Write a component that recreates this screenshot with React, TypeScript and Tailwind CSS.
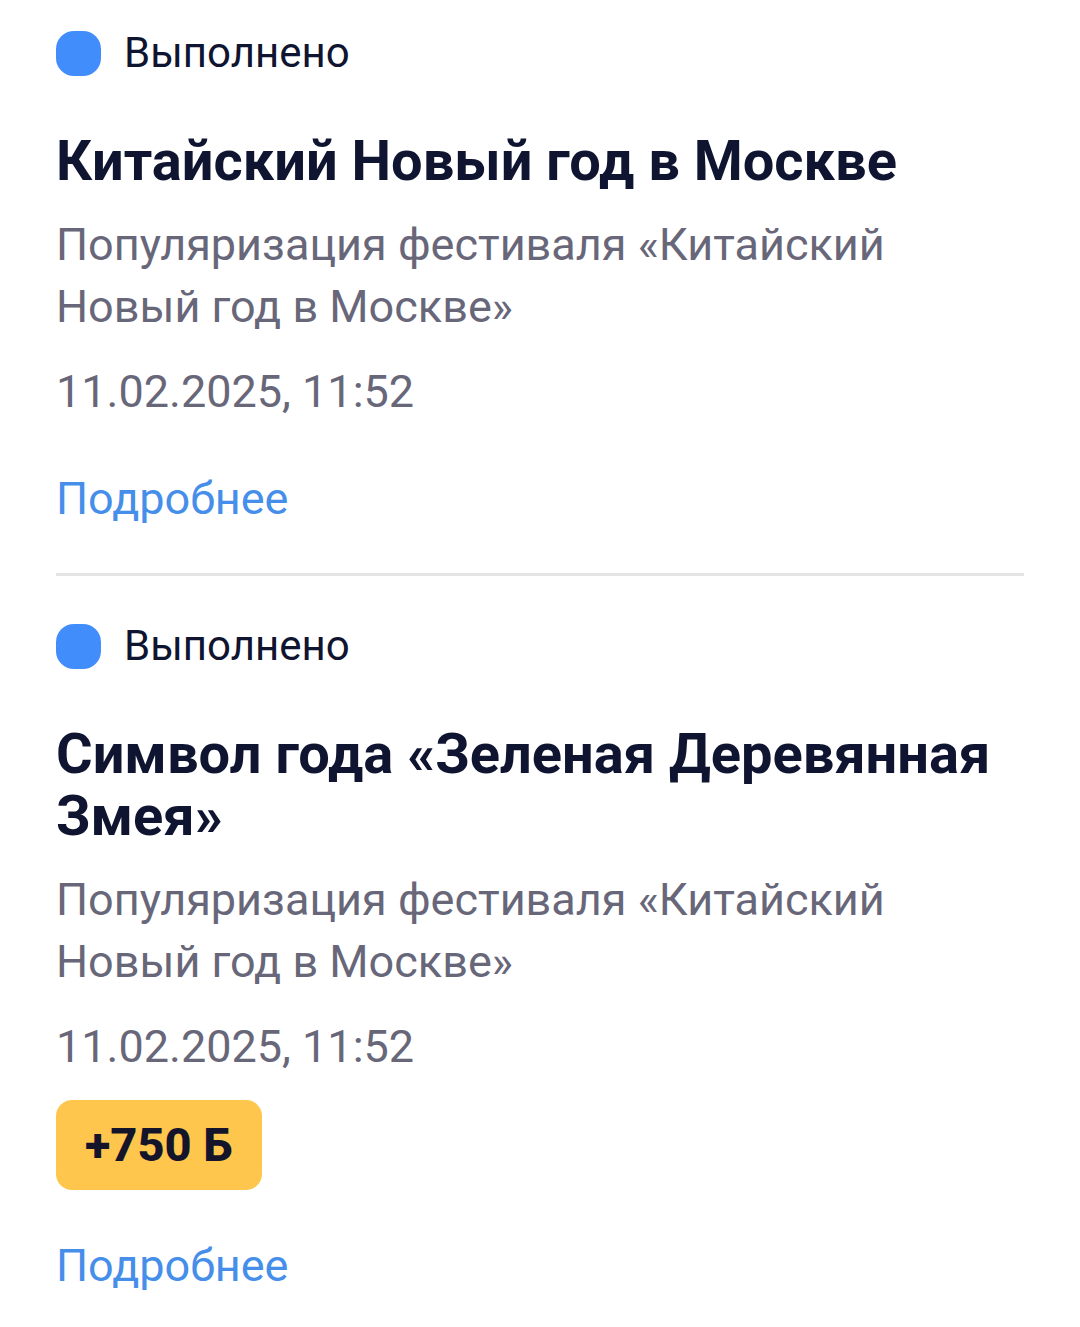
type Task = {
    title: string
    description: string
    date: string
    points?: string
}

const tasks: Task[] = [
    {
        title: 'Китайский Новый год в Москве',
        description: 'Популяризация фестиваля «Китайский Новый год в Москве»',
        date: '11.02.2025, 11:52',
    },
    {
        title: 'Символ года «Зеленая Деревянная Змея»',
        description: 'Популяризация фестиваля «Китайский Новый год в Москве»',
        date: '11.02.2025, 11:52',
        points: '+750 Б',
    },
]

const TaskItem = ({ title, description, date, points }: Task) => (
    <li className="pt-[45px] pb-[43px] first:pt-7">
        <div className="flex items-center gap-[23px]">
            <span className="size-[45px] rounded-[18px] bg-[#428dfc]" />
            <span className="text-[42px] leading-[50px] text-[#0f1430]">
                Выполнено
            </span>
        </div>
        <h2 className="mt-[52px] text-[56px] leading-[62px] font-bold text-[#0f1430]">
            {title}
        </h2>
        <p className="mt-[22px] text-[45px] leading-[62px] text-[#68677a]">
            {description}
        </p>
        <p className="mt-[23px] text-[45px] leading-[62px] text-[#68677a]">
            {date}
        </p>
        {points && (
            <span className="mt-[22px] block w-fit rounded-2xl bg-[#fec64d] px-[29px] py-[14px] text-[47px] leading-[62px] font-extrabold text-[#14142a]">
                {points}
            </span>
        )}
        <a
            href="#"
            className="mt-[45px] block w-fit text-[45px] leading-[62px] text-[#458eea]"
        >
            Подробнее
        </a>
    </li>
)

export default function App() {
    return (
        <main className="bg-white px-14 font-[Roboto,sans-serif]">
            <ul className="divide-y-[3px] divide-[#e4e4e4]">
                {tasks.map((task) => (
                    <TaskItem key={task.title} {...task} />
                ))}
            </ul>
        </main>
    )
}
